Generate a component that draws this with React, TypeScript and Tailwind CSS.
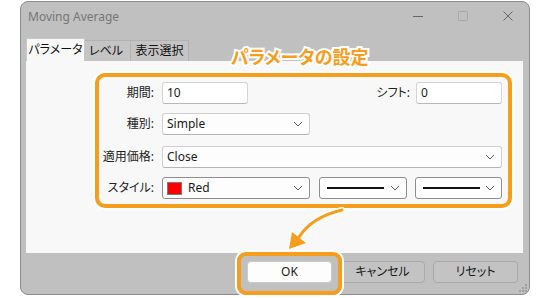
import React from 'react'

const FONT = "font-['Noto_Sans','Noto_Sans_CJK_JP',sans-serif] [font-feature-settings:'palt']"

function Chevron() {
  return (
    <svg width="10" height="6" viewBox="0 0 10 6" className="shrink-0">
      <path d="M1 1 L5 5 L9 1" fill="none" stroke="#606060" strokeWidth="1" />
    </svg>
  )
}

function TextBox({ value, w }: { value: string; w: string }) {
  return (
    <div className={`${w} h-[22px] bg-white border border-[#d4d4d4] border-b-[#b8b8b8] rounded-[3px] pl-[4px] flex items-center text-[12px] text-[#1a1a1a]`}>
      {value}
    </div>
  )
}

function Select({ w, children, dark }: { w: string; children: React.ReactNode; dark?: boolean }) {
  return (
    <div className={`${w} h-[22px] bg-[#fdfdfd] border ${dark ? 'border-[#8e8e8e]' : 'border-[#d0d0d0] border-b-[#b4b4b4]'} rounded-[3px] pl-[4px] pr-[6px] flex items-center text-[12px] text-[#1a1a1a]`}>
      <div className="flex-1 flex items-center min-w-0">{children}</div>
      <Chevron />
    </div>
  )
}

function Label({ children }: { children: React.ReactNode }) {
  return <div className="w-[55px] text-right text-[12px] text-[#222] whitespace-nowrap">{children}</div>
}

export default function App() {
  return (
    <div className={`relative w-[550px] h-[298px] bg-white overflow-hidden ${FONT}`}>
      <div className="pl-[20px] pt-[1px]">
        <div className="w-[510px] h-[294px] flex flex-col rounded-[8px] border border-[#8c8c8c] bg-[#c0c0c0] overflow-hidden">
          {/* title bar */}
          <div className="h-[36px] flex items-start pt-[7px] pl-[7px]">
            <div className="text-[12px] leading-[16px] text-[#777]">Moving Average</div>
            <div className="ml-auto mr-[16px] mt-[2px] flex gap-[35px]">
              <svg width="10" height="10" viewBox="0 0 10 10">
                <path d="M0 5.5 H10" stroke="#666" strokeWidth="1" />
              </svg>
              <svg width="10" height="10" viewBox="0 0 10 10">
                <rect x="0.5" y="0.5" width="9" height="9" rx="1" fill="none" stroke="#a8a8a8" strokeWidth="1" />
              </svg>
              <svg width="10" height="10" viewBox="0 0 10 10">
                <path d="M0.5 0.5 L9.5 9.5 M9.5 0.5 L0.5 9.5" stroke="#666" strokeWidth="1" />
              </svg>
            </div>
          </div>

          {/* tabs */}
          <div className="h-[23px] pl-[5px] flex items-end text-[12px] text-[#111]">
            <div className="w-[59px] h-[23px] bg-[#f8f8f8] border border-[#c8c8c8] border-b-0 flex items-center justify-center">パラメータ</div>
            <div className="w-[46px] h-[21px] bg-[#c4c4c4] border border-[#b2b2b2] border-l-0 border-b-0 flex items-center pl-[4px]">レベル</div>
            <div className="w-[58px] h-[21px] bg-[#c4c4c4] border border-[#b2b2b2] border-l-0 border-b-0 flex items-center justify-center">表示選択</div>
          </div>

          {/* panel */}
          <div className="ml-[5px] w-[497px] h-[192px] bg-[#f8f8f8] pl-[69px] pt-[12px]">
            <div className="w-[417px] h-[135px] border-4 border-[#f59e1e] rounded-[10px] shadow-[0_0_0_2px_#ffffff] pt-[5px] pr-[6px] flex flex-col">
              <div className="h-[22px] flex items-center">
                <Label>期間:</Label>
                <div className="ml-[8px]"><TextBox value="10" w="w-[86px]" /></div>
                <div className="ml-auto text-[12px] text-[#222]">シフト:</div>
                <div className="ml-[6px]"><TextBox value="0" w="w-[86px]" /></div>
              </div>
              <div className="h-[22px] mt-[9px] flex items-center">
                <Label>種別:</Label>
                <div className="ml-[8px]"><Select w="w-[148px]">Simple</Select></div>
              </div>
              <div className="h-[22px] mt-[11px] flex items-center">
                <Label>適用価格:</Label>
                <div className="ml-[8px]"><Select w="w-[340px]">Close</Select></div>
              </div>
              <div className="h-[22px] mt-[9px] flex items-center">
                <Label>スタイル:</Label>
                <div className="ml-[8px]">
                  <Select w="w-[148px]" dark>
                    <span className="w-[15px] h-[13px] bg-[#ff0000] border border-[#7a7a7a] shrink-0" />
                    <span className="ml-[6px]">Red</span>
                  </Select>
                </div>
                <div className="ml-[9px]">
                  <Select w="w-[88px]" dark>
                    <span className="ml-[3px] w-[57px] h-[1.5px] bg-[#111]" />
                  </Select>
                </div>
                <div className="ml-[8px]">
                  <Select w="w-[87px]" dark>
                    <span className="ml-[3px] w-[57px] h-[1.5px] bg-[#111]" />
                  </Select>
                </div>
              </div>
            </div>
          </div>

          {/* buttons */}
          <div className="relative flex-1 flex justify-end items-start pt-[8px] pr-[11px] gap-[8px] text-[12px] text-[#1a1a1a]">
            <button className="w-[85px] h-[22px] bg-[#fdfdfd] border border-[#cacaca] rounded-[4px] flex items-center justify-center">OK</button>
            <button className="w-[85px] h-[22px] bg-[#c3c3c3] border border-[#a9a9a9] rounded-[4px] flex items-center justify-center">キャンセル</button>
            <button className="w-[85px] h-[22px] bg-[#c3c3c3] border border-[#a9a9a9] rounded-[4px] flex items-center justify-center">リセット</button>
            <svg className="absolute right-[1px] bottom-[1px]" width="9" height="9" viewBox="0 0 9 9">
              <rect x="6" y="0" width="2" height="2" fill="#a0a0a0" />
              <rect x="3" y="3" width="2" height="2" fill="#a0a0a0" />
              <rect x="6" y="3" width="2" height="2" fill="#a0a0a0" />
              <rect x="0" y="6" width="2" height="2" fill="#a0a0a0" />
              <rect x="3" y="6" width="2" height="2" fill="#a0a0a0" />
              <rect x="6" y="6" width="2" height="2" fill="#a0a0a0" />
            </svg>
          </div>
        </div>
      </div>

      {/* annotations */}
      <div className="absolute left-[231px] top-[46px] text-[18px] leading-[22px] font-bold text-[#f59e1e] [-webkit-text-stroke:4px_#ffffff] [paint-order:stroke_fill]">
        パラメータの設定
      </div>
      <div className="absolute left-[237px] top-[252px] w-[105px] h-[43px] border-4 border-[#f59e1e] rounded-[9px] shadow-[0_0_0_2px_#ffffff]" />
      <svg className="absolute left-0 top-0" width="550" height="298" viewBox="0 0 550 298">
        <path d="M342 210 Q312 217 299 237" fill="none" stroke="#ffffff" strokeWidth="6" strokeLinecap="round" />
        <path d="M289 249 L292 232 L306 243 Z" fill="#ffffff" stroke="#ffffff" strokeWidth="3" strokeLinejoin="round" />
        <path d="M342 210 Q312 217 299 237" fill="none" stroke="#f59e1e" strokeWidth="3" strokeLinecap="round" />
        <path d="M289 249 L292 232 L306 243 Z" fill="#f59e1e" />
      </svg>
    </div>
  )
}
